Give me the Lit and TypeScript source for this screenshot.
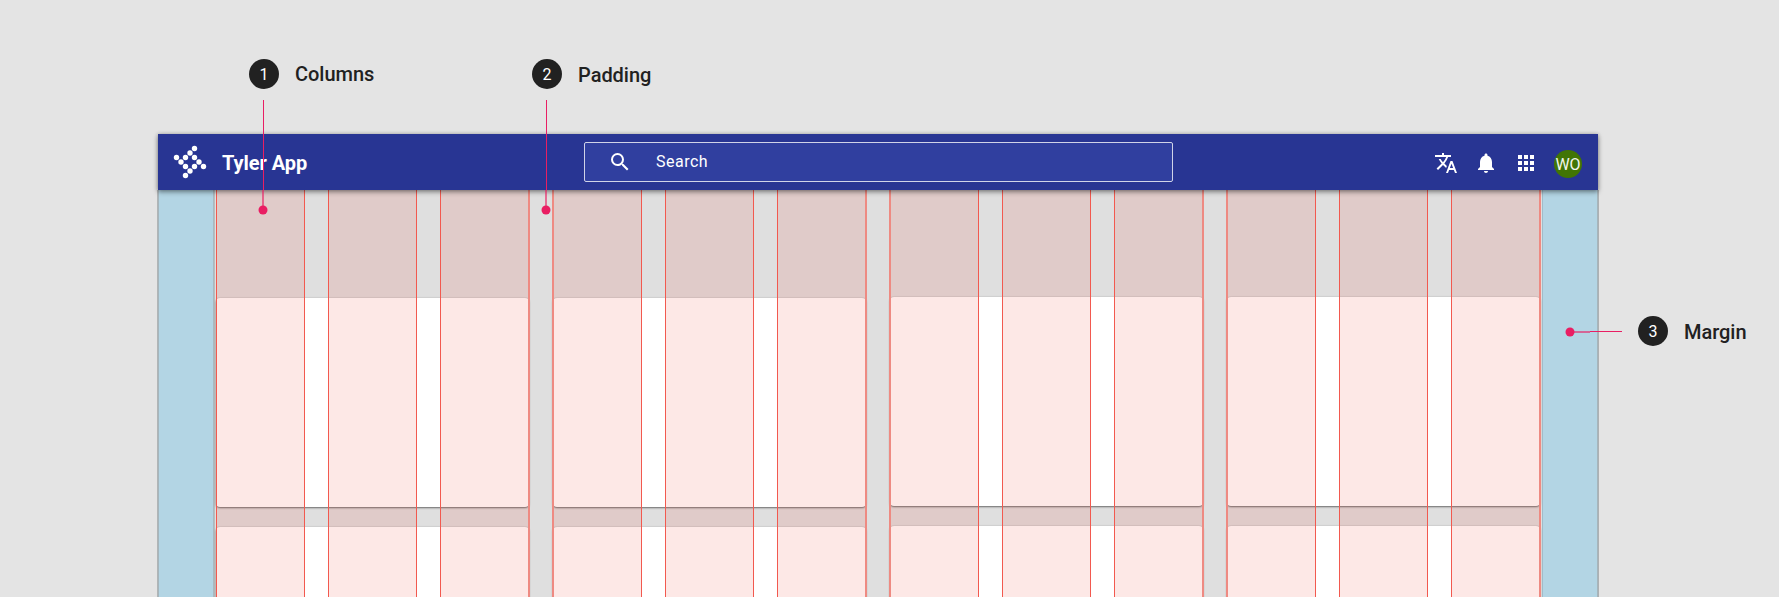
import { LitElement, html, css, svg } from "lit";
import { customElement, property } from "lit/decorators.js";

@customElement("callout-label")
class CalloutLabel extends LitElement {
  @property() num = "";
  @property() label = "";
  static styles = css`
    :host { display: flex; align-items: center; gap: 16px; height: 30px; font-family: Roboto, sans-serif; color: #212121; }
    .badge { width: 30px; height: 30px; border-radius: 50%; background: #212121; color: #fff; font-size: 16px; line-height: 31px; text-align: center; }
    .text { font-size: 20px; font-weight: 500; line-height: 30px; white-space: nowrap; letter-spacing: -.03px; }
    :host([low]) .text { padding-top: 2px; }
  `;
  render() {
    return html`<div class="badge">${this.num}</div><div class="text">${this.label}</div>`;
  }
}

@customElement("app-bar")
class AppBar extends LitElement {
  static styles = css`
    :host { display: flex; box-sizing: border-box; height: 56px; align-items: center; background: #283593; color: #fff; font-family: Roboto, sans-serif; box-shadow: 0 2px 5px rgba(0,0,0,.4), 0 0 4px rgba(0,0,0,.2); }
    .brand { display: flex; align-items: center; width: 426px; }
    .logo { width: 34px; height: 34px; margin-left: 15px; }
    .title { margin-left: 15px; padding-top: 1px; font-size: 20px; font-weight: 700; line-height: 28px; letter-spacing: -.05px; }
    .search { box-sizing: border-box; width: 589px; height: 40px; border: 1px solid #d0d3e8; border-radius: 2px; background: #303f9f; display: flex; align-items: center; font-size: 16px; letter-spacing: .5px; }
    .search svg { margin: 0 24px 0 23px; }
    .search span { padding-bottom: 2px; }
    .icons { display: flex; align-items: center; margin-left: auto; padding-right: 16px; }
    .icons svg { margin-right: 16px; position: relative; top: 1px; }
    .avatar { width: 28px; height: 28px; border-radius: 50%; background: #417505; color: #f2f5ee; font-size: 16px; line-height: 29px; text-align: center; margin: 4px 0 0 0; }
  `;
  render() {
    const dots = [[20.5, 2.5], [16, 7], [11.5, 11.5], [20.5, 11.5], [2.5, 11.5], [7, 16], [25, 16], [11.5, 20.5], [20.5, 20.5], [29.5, 20.5], [16, 25], [11.5, 29.5]];
    return html`
      <div class="brand">
        <svg class="logo" viewBox="0 0 34 34" fill="#fff">${dots.map(([x, y]) => svg`<circle cx=${x + 1} cy=${y + 1} r="2.7"/>`)}</svg>
        <div class="title">Tyler App</div>
      </div>
      <div class="search">
        <svg width="24" height="24" viewBox="0 0 24 24" fill="#fff"><path d="M15.5 14h-.79l-.28-.27A6.47 6.47 0 0 0 16 9.5 6.5 6.5 0 1 0 9.5 16c1.61 0 3.09-.59 4.23-1.57l.27.28v.79l5 4.99L20.49 19l-4.99-5zm-6 0C7.01 14 5 11.99 5 9.5S7.01 5 9.5 5 14 7.01 14 9.5 11.99 14 9.5 14z"/></svg>
        <span>Search</span>
      </div>
      <div class="icons">
        <svg width="24" height="24" viewBox="0 0 24 24" fill="#fff"><path d="M12.87 15.07l-2.54-2.51.03-.03A17.52 17.52 0 0 0 14.07 6H17V4h-7V2H8v2H1v1.99h11.17C11.5 7.92 10.44 9.75 9 11.35 8.07 10.32 7.3 9.19 6.69 8h-2c.73 1.63 1.73 3.17 2.98 4.56l-5.09 5.02L4 19l5-5 3.11 3.11.76-2.04zM18.5 10h-2L12 22h2l1.12-3h4.75L21 22h2l-4.5-12zm-2.62 7l1.62-4.33L19.12 17h-3.24z"/></svg>
        <svg width="24" height="24" viewBox="0 0 24 24" fill="#fff"><path d="M12 22c1.1 0 2-.9 2-2h-4c0 1.1.89 2 2 2zm6-6v-5c0-3.07-1.64-5.64-4.5-6.32V4c0-.83-.67-1.5-1.5-1.5s-1.5.67-1.5 1.5v.68C7.63 5.36 6 7.92 6 11v5l-2 2v1h16v-1l-2-2z"/></svg>
        <svg width="24" height="24" viewBox="0 0 24 24" fill="#fff"><path d="M4 8h4V4H4v4zm6 12h4v-4h-4v4zm-6 0h4v-4H4v4zm0-6h4v-4H4v4zm6 0h4v-4h-4v4zm6-10v4h4V4h-4zm-6 4h4V4h-4v4zm6 6h4v-4h-4v4zm0 6h4v-4h-4v4z"/></svg>
        <div class="avatar">WO</div>
      </div>`;
  }
}

@customElement("app-root")
class AppRoot extends LitElement {
  static styles = css`
    :host { display: block; position: relative; width: 1779px; height: 597px; overflow: hidden; background: #e4e4e4; }
    .window { box-sizing: border-box; margin-left: 158px; width: 1440px; padding-top: 134px; }
    app-bar { position: relative; z-index: 2; }
    .body { display: grid; grid-template-columns: 56px 1fr 56px; height: 407px; background: #dfdfdf; box-shadow: -1px 0 0 #b1b5b6, 1px 0 0 #adb1b3; }
    .margin { background: #b3d5e4; box-shadow: inset 1px 0 0 #a5b5bc, inset -1px 0 0 #a9b9bf, 1px 0 0 #b9bdbf; }
    .margin.end { box-shadow: inset 1px 0 0 #9fbcc9, inset -1px 0 0 #a5b5bc; }
    .content { display: grid; grid-template-columns: repeat(4, 313px); column-gap: 24px; padding: 0 0 0 2px; position: relative; }
    .stack { display: flex; flex-direction: column; gap: 20px; padding-top: 108px; }
    .stack.high { padding-top: 107px; }
    .card { height: 209px; flex: none; border-radius: 4px; background: #fff; box-shadow: 0 1px 2px rgba(0,0,0,.5), 0 0 2px rgba(0,0,0,.15); }
    .overlay { position: absolute; inset: 0; display: grid; grid-template-columns: 112px 112px 112px 113px 112px 112px 113px 112px 112px 113px 112px 112px; padding-left: 2px; }
    .col { box-sizing: border-box; width: 89px; border: 0 solid #f2594f; border-width: 0 1px; background: rgba(240,68,52,.12); background-clip: padding-box; }
    .col.first { width: 90px; border-left: 2px solid #ee8a82; }
    .col.last { width: 90px; border-right: 2px solid #ee8a82; }
    .c { position: absolute; z-index: 4; }
    .c1 { left: 249px; top: 59px; } .c2 { left: 532px; top: 59px; } .c3 { left: 1638px; top: 316px; }
    .lines { position: absolute; inset: 0; z-index: 3; }
  `;
  render() {
    return html`
      <div class="window">
        <app-bar></app-bar>
        <div class="body">
          <div class="margin"></div>
          <div class="content">
            ${[0, 1, 2, 3].map(i => html`<div class="stack ${i > 1 ? "high" : ""}"><div class="card"></div><div class="card"></div></div>`)}
            <div class="overlay">${Array.from({ length: 12 }, (_, i) => html`<div class="col ${i && i % 3 === 0 ? "first" : ""} ${i % 3 === 2 ? "last" : ""}"></div>`)}</div>
          </div>
          <div class="margin end"></div>
        </div>
      </div>
      <callout-label class="c c1" num="1" label="Columns"></callout-label>
      <callout-label class="c c2" num="2" label="Padding" low></callout-label>
      <callout-label class="c c3" num="3" label="Margin" low></callout-label>
      <svg class="lines" width="1779" height="597" fill="#e91e63">
        <path d="M263 100h1v90h-1zM546 100h1v90h-1zM1590 331h32v1h-32z"/>
        <path d="M262 190h2v17h-2zM545 190h2v17h-2zM1570 331h20v2h-20z" opacity=".6"/>
        <circle cx="263" cy="210" r="4.5"/><circle cx="546" cy="210" r="4.5"/><circle cx="1570" cy="332" r="4.5"/>
      </svg>`;
  }
}
